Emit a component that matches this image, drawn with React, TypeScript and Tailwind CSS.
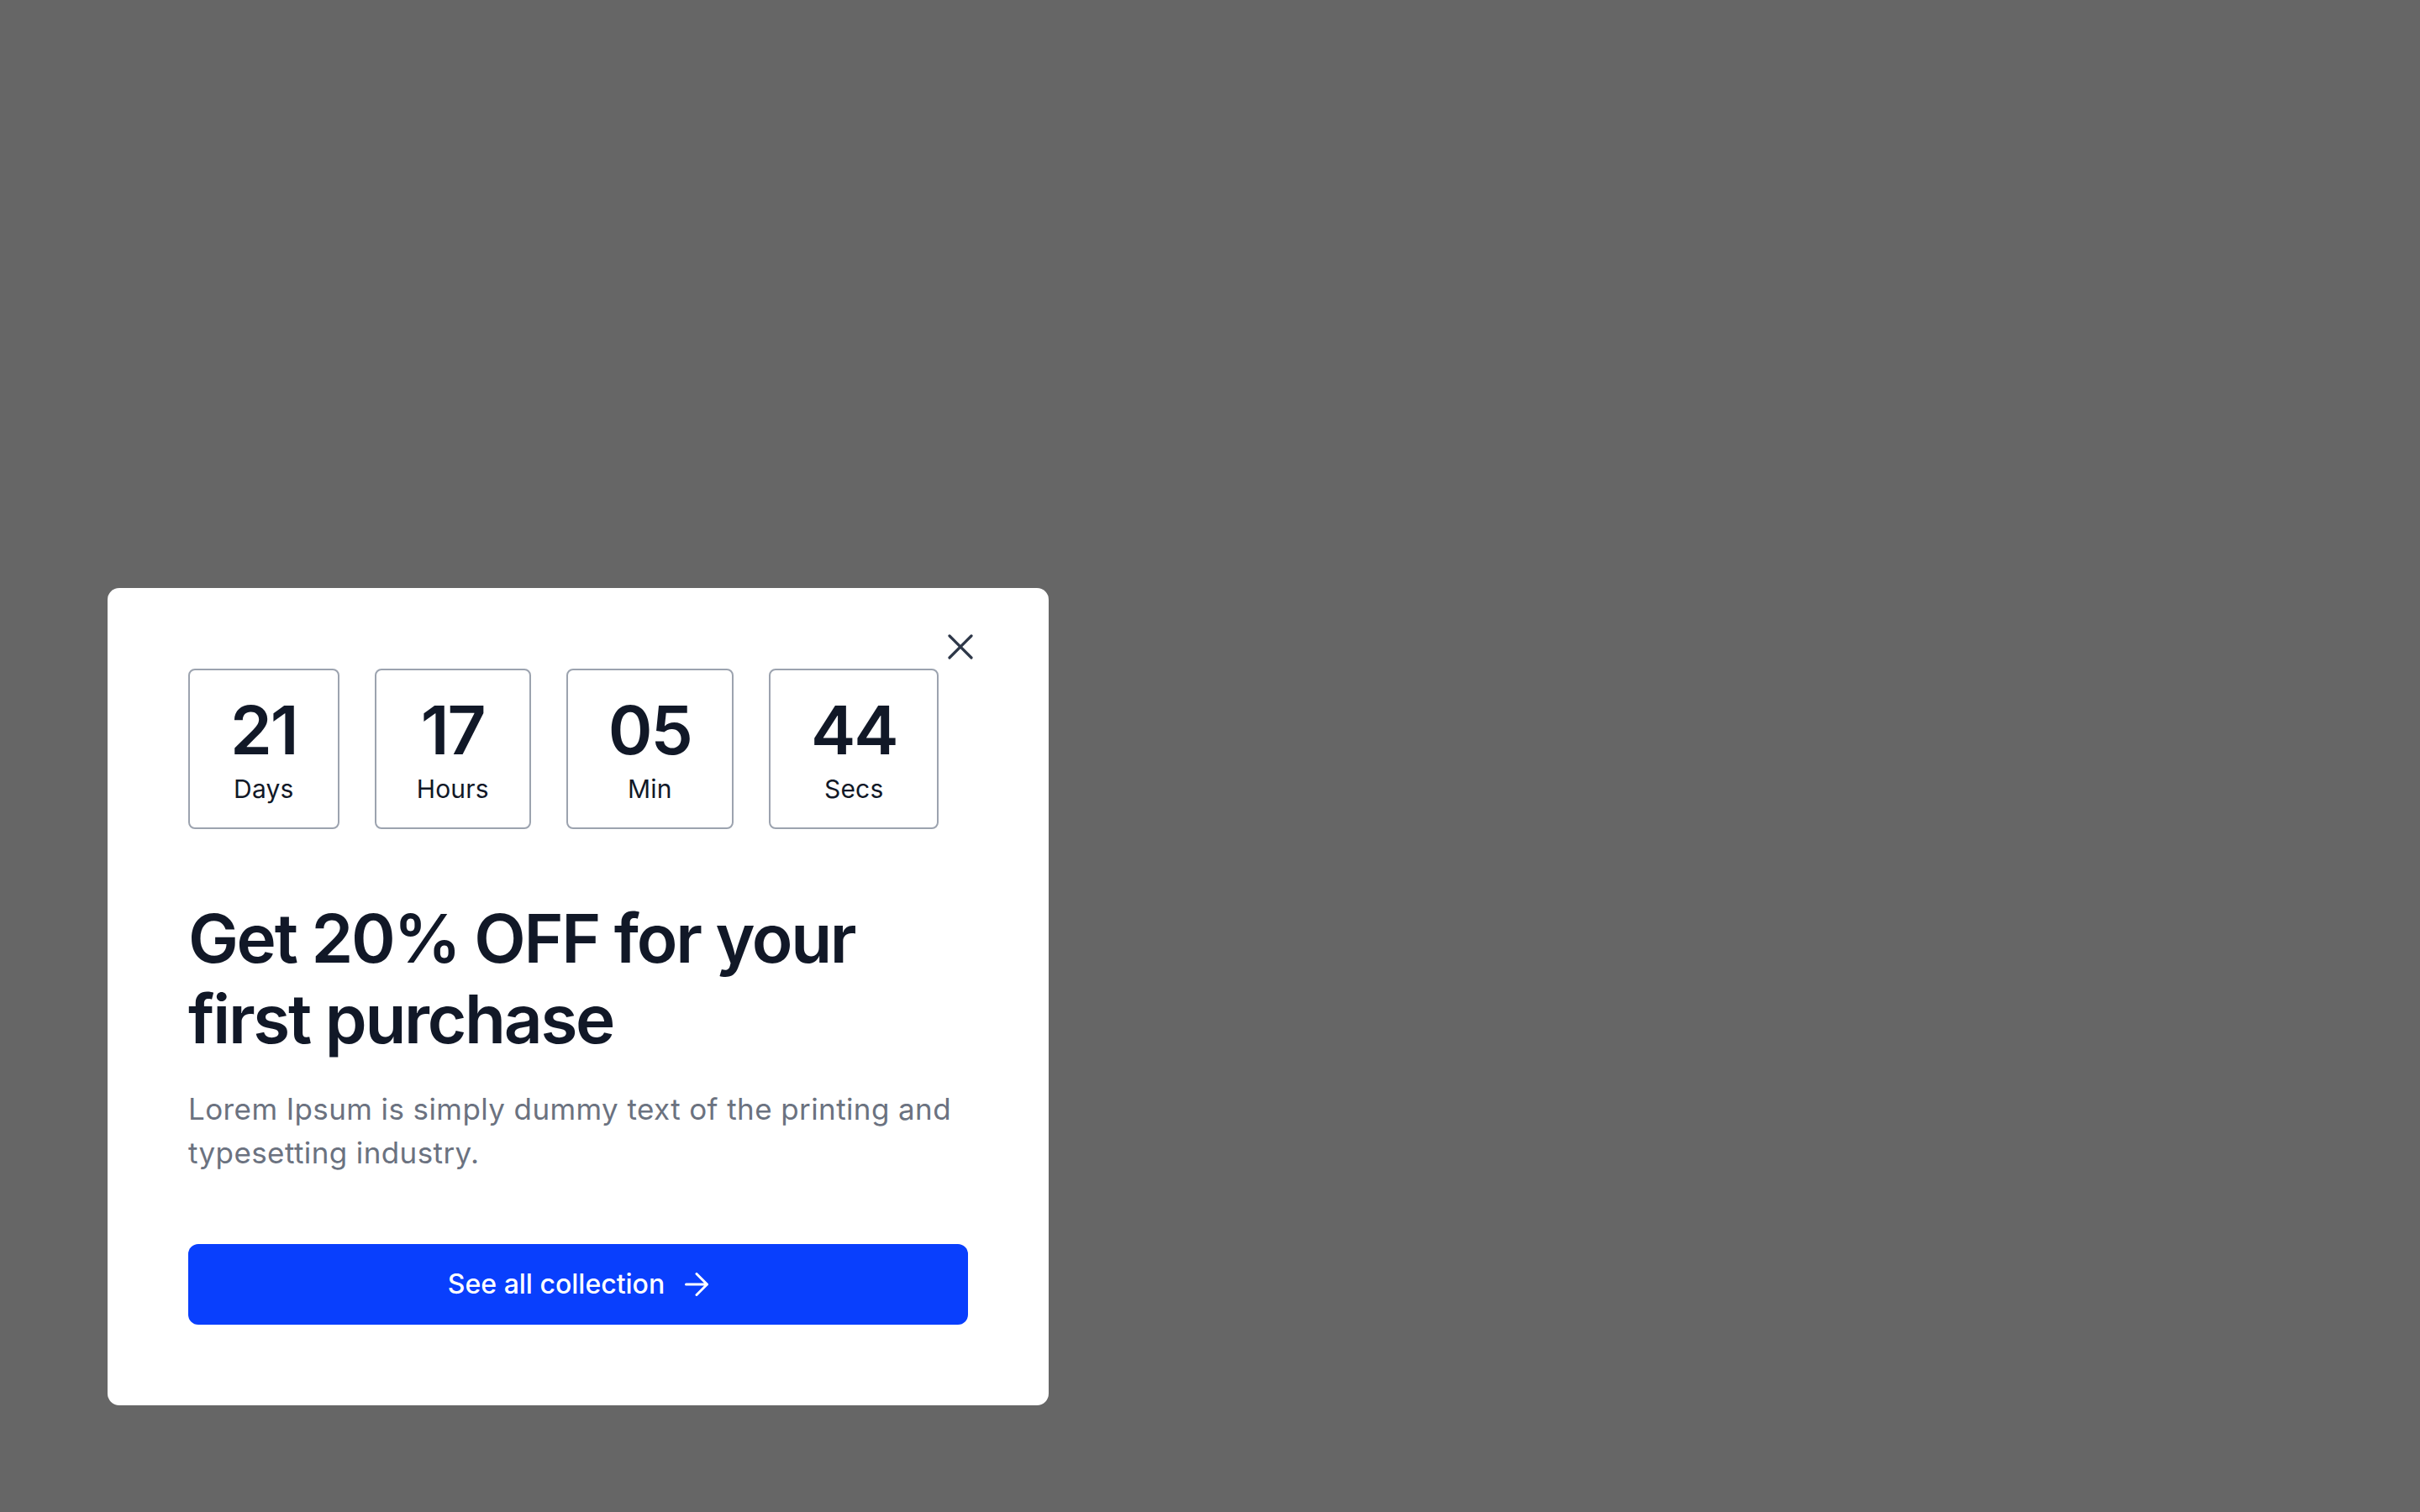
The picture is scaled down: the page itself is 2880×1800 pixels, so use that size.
import React from 'react';

const units = [
  { value: '21', label: 'Days' },
  { value: '17', label: 'Hours' },
  { value: '05', label: 'Min' },
  { value: '44', label: 'Secs' },
];

export default function App() {
  return (
    <div className="min-h-screen w-full bg-[#666666] pl-[128px] pt-[700px] font-['Inter',sans-serif]">
      {/* Promo modal */}
      <div className="relative w-[1120px] rounded-[14px] bg-white p-[96px]">
        <button className="absolute right-[84px] top-[49px] flex h-[42px] w-[42px] items-center justify-center text-[#2d3748]">
          <svg width="30" height="30" viewBox="0 0 30 30" fill="none" stroke="currentColor" strokeWidth="3.2" strokeLinecap="round">
            <path d="M2 2l26 26M28 2L2 28" />
          </svg>
        </button>

        {/* Countdown */}
        <div className="flex gap-[42px]">
          {units.map((u) => (
            <div
              key={u.label}
              className="flex flex-col items-center rounded-[8px] border-2 border-[#9ca3af] px-[48px] py-[23px]"
            >
              <span className="text-[80px] font-semibold leading-[96px] tracking-[-2px] text-[#111827]">{u.value}</span>
              <span className="text-[30px] leading-[45px] tracking-[0.2px] text-[#111827]">{u.label}</span>
            </div>
          ))}
        </div>

        <h1 className="mt-[82px] text-[80px] font-semibold leading-[96px] tracking-[-2.3px] text-[#111827]">
          Get 20% OFF for your
          <br />
          first purchase
        </h1>
        <p className="mt-[33px] text-[35px] leading-[52px] tracking-[0.4px] text-[#6b7280]">
          Lorem Ipsum is simply dummy text of the printing and typesetting industry.
        </p>

        <button className="mt-[83px] flex h-[96px] w-full items-center justify-center gap-[24px] rounded-[12px] bg-[#093ffd] text-[32px] font-medium text-white">
          <span>See all collection</span>
          <svg width="28" height="28" viewBox="0 0 28 28" fill="none" stroke="currentColor" strokeWidth="3" strokeLinecap="round" strokeLinejoin="round">
            <path d="M1.5 14h25M14 1.5L26.5 14 14 26.5" />
          </svg>
        </button>
      </div>
    </div>
  );
}
